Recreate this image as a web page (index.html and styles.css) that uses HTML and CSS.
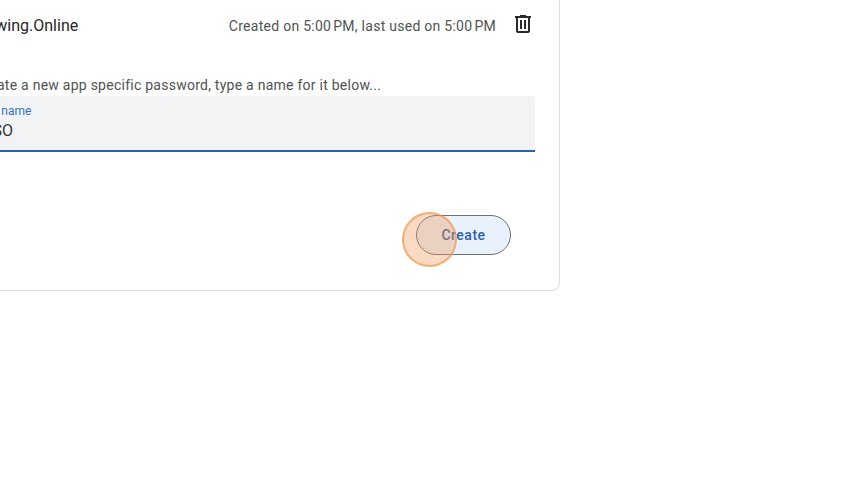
FILE: index.html
```html
<!DOCTYPE html>
<html lang="en">
<head>
<meta charset="utf-8">
<title>App passwords</title>
<link rel="stylesheet" href="styles.css">
</head>
<body>
<main class="card">
  <div class="app-row">
    <span class="app-name">Drawing.Online</span>
    <span class="app-meta">Created on 5:00&#8239;PM, last used on 5:00&#8239;PM</span>
    <button class="icon-btn" aria-label="Delete">
      <svg viewBox="0 0 24 24" width="24" height="24"><path class="trash" d="M15 3V4H20V6H19V19C19 20.1 18.1 21 17 21H7C5.9 21 5 20.1 5 19V6H4V4H9V3H15ZM7 6V19H17V6H7ZM9 8H11V17H9V8ZM13 8H15V17H13V8Z"/></svg>
    </button>
  </div>
  <p class="hint">To create a new app specific password, type a name for it below...</p>
  <div class="field">
    <span class="field-label">App name</span>
    <span class="field-value">SSO</span>
  </div>
  <div class="actions">
    <button class="create">Create</button>
  </div>
</main>
<div class="click-mark"></div>
</body>
</html>
```

FILE: styles.css
```css
* { box-sizing: border-box; }
html, body { height: 100%; }
body {
  margin: 0;
  background: #fff;
  overflow: hidden;
  font-family: Roboto, "Liberation Sans", sans-serif;
  color: #1f1f1f;
  position: relative;
}
.card {
  width: 800px;
  height: 321px;
  margin: -30px 0 0 -240px;
  padding: 0 24px 0 240px;
  background: #fff;
  border: 1px solid #dadce0;
  border-radius: 8px;
  display: flex;
  flex-direction: column;
}
.app-row {
  display: flex;
  align-items: center;
  height: 40px;
  margin-top: 34px;
  margin-left: -30px;
}
.app-name { font-size: 16px; flex: 1; color: #262626; }
.app-meta { font-size: 14px; margin-top: 2px; letter-spacing: 0.27px; color: #505352; }
.icon-btn {
  width: 24px;
  height: 24px;
  margin-left: 15px;
  margin-top: -3px;
  padding: 0;
  border: 0;
  background: none;
  display: flex;
}
.trash { fill: #2a2a2a; }
.hint {
  margin: 30px 0 0 -44px;
  font-size: 14px;
  line-height: 20px;
  letter-spacing: 0.25px;
  color: #505352;
}
.field {
  height: 56px;
  margin: 1px 0 0 -40px;
  padding: 8px 0 0 16px;
  background: #f1f3f5;
  border-bottom: 2px solid #2a62ad;
  border-radius: 4px 4px 0 0;
  display: flex;
  flex-direction: column;
}
.field-label { font-size: 12px; line-height: 14px; color: #3a70b5; }
.field-value { font-size: 16px; line-height: 22px; margin: 2px 0 0 6px; color: #333; }
.actions {
  display: flex;
  justify-content: flex-end;
  margin-top: 63px;
  padding-right: 24px;
}
.create {
  width: 95px;
  height: 40px;
  border: 1px solid #6d7278;
  border-radius: 20px;
  background: #e9f1fc;
  color: #2a62ad;
  font: 500 14px Roboto, "Liberation Sans", sans-serif;
  letter-spacing: 0.5px;
}
.click-mark {
  position: absolute;
  left: 402px;
  top: 212px;
  width: 55px;
  height: 55px;
  border-radius: 50%;
  background: rgba(240, 150, 80, 0.35);
  border: 2px solid rgba(240, 150, 80, 0.65);
}
```
